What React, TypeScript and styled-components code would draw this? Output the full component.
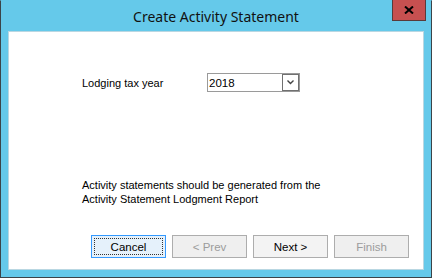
import styled, { createGlobalStyle } from "styled-components";

const GlobalStyle = createGlobalStyle`
  html, body { margin: 0; padding: 0; background: #fff; }
  body { font-family: "Liberation Sans", Arial, sans-serif; }
`;

const Window = styled.div`
  width: 432px;
  height: 278px;
  box-sizing: border-box;
  background: #65c9ea;
  border: 1px solid #3b4449;
  border-top-color: #65c9ea;
  display: flex;
  flex-direction: column;
`;

const TitleBar = styled.div`
  height: 30px;
  position: relative;
  display: flex;
  align-items: center;
  justify-content: center;
`;

const Title = styled.div`
  font-family: "Noto Sans", "Open Sans", sans-serif;
  font-size: 14px;
  color: #111;
  padding-top: 1px;
`;

const CloseButton = styled.div`
  position: absolute;
  top: -1px;
  right: 5px;
  width: 34px;
  height: 21px;
  box-sizing: border-box;
  background: #c75050;
  border: 1px solid #5a3a3a;
  border-top: none;
  display: flex;
  align-items: center;
  justify-content: center;
`;

const Body = styled.div`
  flex: 1;
  margin: 0 7px 7px;
  background: #fff;
  border: 1px solid #b9d7e2;
  box-sizing: border-box;
  display: flex;
  flex-direction: column;
  padding: 41px 14px 11px 73px;
  font-size: 11px;
  color: #000;
`;

const FieldRow = styled.div`
  display: flex;
  align-items: center;
  height: 19px;
`;

const Label = styled.div`
  width: 125px;
`;

const Combo = styled.div`
  width: 93px;
  height: 19px;
  box-sizing: border-box;
  border: 1px solid #9a9a9a;
  display: flex;
  align-items: stretch;
  font-size: 11.5px;
`;

const ComboValue = styled.div`
  flex: 1;
  padding-left: 1px;
  display: flex;
  align-items: center;
`;

const DropButton = styled.div`
  width: 17px;
  box-sizing: border-box;
  border: 1px solid #707070;
  display: flex;
  align-items: center;
  justify-content: center;
`;

const Message = styled.div`
  margin-top: auto;
  line-height: 14px;
  margin-bottom: 29px;
`;

const ButtonRow = styled.div`
  display: flex;
  justify-content: flex-end;
  gap: 6px;
  font-size: 11.5px;
`;

const Button = styled.div<{ $disabled?: boolean; $focused?: boolean }>`
  width: 75px;
  height: 23px;
  box-sizing: border-box;
  border: 1px solid ${(p) => (p.$focused ? "#3399ff" : "#adadad")};
  background: ${(p) => (p.$focused ? "#e5f1fb" : p.$disabled ? "#efefef" : "#f3f3f3")};
  color: ${(p) => (p.$disabled ? "#9c9c9c" : "#000")};
  display: flex;
  align-items: center;
  justify-content: center;
  position: relative;
  ${(p) =>
    p.$focused &&
    `&::after {
      content: "";
      position: absolute;
      inset: 2px;
      border: 1px dotted #333;
    }`}
`;

export default function App() {
  return (
    <>
      <GlobalStyle />
      <Window>
        <TitleBar>
          <Title>Create Activity Statement</Title>
          <CloseButton>
            <svg width="10" height="8" viewBox="0 0 10 8">
              <path d="M1 0.5 L9 7.5 M9 0.5 L1 7.5" stroke="#000" strokeWidth="2" />
            </svg>
          </CloseButton>
        </TitleBar>
        <Body>
          <FieldRow>
            <Label>Lodging tax year</Label>
            <Combo>
              <ComboValue>2018</ComboValue>
              <DropButton>
                <svg width="7" height="5" viewBox="0 0 7 5">
                  <path d="M0.5 0.5 L3.5 3.5 L6.5 0.5" stroke="#444" strokeWidth="1.4" fill="none" />
                </svg>
              </DropButton>
            </Combo>
          </FieldRow>
          <Message>
            Activity statements should be generated from the
            <br />
            Activity Statement Lodgment Report
          </Message>
          <ButtonRow>
            <Button $focused>Cancel</Button>
            <Button $disabled>&lt; Prev</Button>
            <Button>Next &gt;</Button>
            <Button $disabled>Finish</Button>
          </ButtonRow>
        </Body>
      </Window>
    </>
  );
}
